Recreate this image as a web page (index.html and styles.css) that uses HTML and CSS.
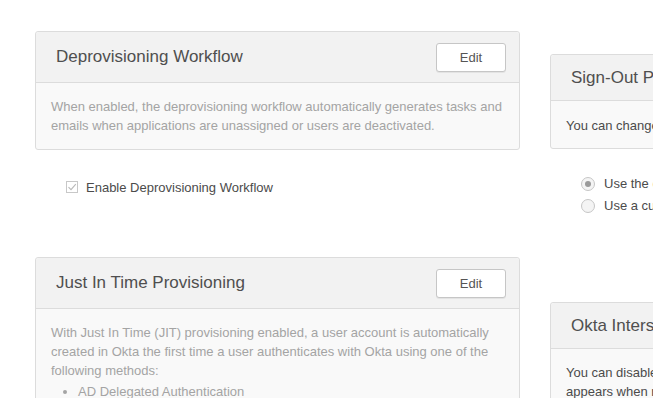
FILE: index.html
```html
<!DOCTYPE html>
<html lang="en">

<head>
    <meta charset="UTF-8">
    <meta name="viewport" content="width=device-width, initial-scale=1.0">
    <title>Provisioning Settings</title>
    <link rel="stylesheet" href="styles.css">
</head>

<body>
    <div class="page">
        <div class="column">
            <!-- Deprovisioning -->
            <div class="card card-deprov">
                <div class="card-head">
                    <h2>Deprovisioning Workflow</h2>
                    <button class="btnEdit">Edit</button>
                </div>
                <div class="card-body">
                    <p>When enabled, the deprovisioning workflow automatically generates tasks and emails when applications are unassigned or users are deactivated.</p>
                </div>
            </div>

            <label class="check-row">
                <span class="checkbox">
                    <svg width="12" height="12" viewBox="0 0 12 12">
                        <rect x="0.5" y="0.5" width="11" height="11" fill="#fff" stroke="#c8c8c8"/>
                        <path d="M2.5 6.2 L5 8.6 L9.8 3.2" fill="none" stroke="#b9b9b9" stroke-width="1.1"/>
                    </svg>
                </span>
                Enable Deprovisioning Workflow
            </label>

            <!-- JIT -->
            <div class="card card-jit">
                <div class="card-head">
                    <h2>Just In Time Provisioning</h2>
                    <button class="btnEdit">Edit</button>
                </div>
                <div class="card-body">
                    <p>With Just In Time (JIT) provisioning enabled, a user account is automatically created in Okta the first time a user authenticates with Okta using one of the following methods:</p>
                    <ul>
                        <li>AD Delegated Authentication</li>
                        <li>Desktop SSO</li>
                    </ul>
                </div>
            </div>
        </div>

        <div class="column">
            <div class="card card-signout">
                <div class="card-head small">
                    <h2>Sign-Out Page</h2>
                </div>
                <div class="card-body">
                    <p class="nowrap">You can change the page users see after they sign out of Okta.</p>
                </div>
            </div>

            <div class="radios">
                <label class="radio-row"><span class="radio checked"></span>Use the default sign-out page</label>
                <label class="radio-row"><span class="radio"></span>Use a custom sign-out page</label>
            </div>

            <div class="card card-interstitial">
                <div class="card-head small">
                    <h2>Okta Interstitial Page</h2>
                </div>
                <div class="card-body dark">
                    <p class="nowrap">You can disable the interstitial page that</p>
                    <p class="nowrap">appears when redirecting users to applications.</p>
                </div>
            </div>
        </div>
    </div>
</body>

</html>
```

FILE: styles.css
```css
body {
    margin: 0;
    background-color: #fff;
    font-family: "Liberation Sans", Arial, sans-serif;
    color: #5d5d5d;
    overflow: hidden;
}

.page {
    display: flex;
    gap: 30px;
    padding: 31px 0 0 35px;
}

.column {
    flex: 0 0 485px;
    width: 485px;
}

.card {
    border: 1px solid #dcdcdc;
    border-radius: 3px;
    background-color: #f9f9f9;
}

.card-head {
    display: flex;
    align-items: center;
    justify-content: space-between;
    height: 50px;
    padding: 0 13px 0 20px;
    background-color: #f2f2f2;
    border-bottom: 1px solid #dcdcdc;
    border-radius: 3px 3px 0 0;
}

.card-head.small {
    height: 45px;
}

.card-head h2 {
    margin: 0;
    font-size: 17px;
    font-weight: normal;
    color: #4f4f4f;
}

.btnEdit {
    width: 70px;
    height: 29px;
    font-family: "Liberation Sans", Arial, sans-serif;
    font-size: 13px;
    color: #555;
    background-color: #fff;
    border: 1px solid #c6c6c6;
    border-radius: 3px;
    box-shadow: 0 1px 0 rgba(0, 0, 0, 0.06);
}

.card-body {
    padding: 14px 16px 14px 15px;
    font-size: 13px;
    line-height: 19px;
    color: #a4a4a4;
}

.card-body p {
    margin: 0;
}

.card-body ul {
    margin: 2px 0 0 0;
    padding-left: 27px;
}

.card-body.dark {
    color: #4b4b4b;
}

.card-signout .card-body {
    color: #4b4b4b;
    padding: 15px 15px 13px 15px;
}

.nowrap {
    white-space: nowrap;
}

.check-row {
    display: flex;
    align-items: center;
    gap: 8px;
    height: 18px;
    margin: 28px 0 0 31px;
    font-size: 13px;
    color: #4b4b4b;
}

.checkbox {
    display: flex;
}

.card-jit {
    margin-top: 61px;
}

.card-signout {
    margin-top: 23px;
}

.radios {
    display: flex;
    flex-direction: column;
    gap: 7px;
    margin: 27px 0 0 31px;
}

.radio-row {
    display: flex;
    align-items: center;
    gap: 9px;
    font-size: 13px;
    color: #4b4b4b;
    white-space: nowrap;
}

.radio {
    width: 14px;
    height: 14px;
    border: 1px solid #c6c6c6;
    border-radius: 50%;
    background-color: #f4f4f4;
    box-sizing: border-box;
    position: relative;
}

.radio.checked::after {
    content: "";
    position: absolute;
    left: 3px;
    top: 3px;
    width: 6px;
    height: 6px;
    border-radius: 50%;
    background-color: #9a9a9a;
}

.card-interstitial {
    margin-top: 89px;
}
```
